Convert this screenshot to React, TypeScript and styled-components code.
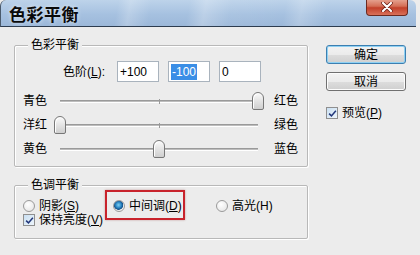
import { ReactNode } from "react";
import styled, { createGlobalStyle } from "styled-components";

const GlobalStyle = createGlobalStyle`
  html, body {
    margin: 0;
    padding: 0;
    background: #ececec;
  }
  body {
    font-family: "Liberation Sans", "Noto Sans CJK SC", sans-serif;
    font-size: 12px;
    color: #000;
  }
`;

type SliderRowData = { left: string; right: string; value: number };

const sliders: SliderRowData[] = [
  { left: "青色", right: "红色", value: 100 },
  { left: "洋红", right: "绿色", value: -100 },
  { left: "黄色", right: "蓝色", value: 0 },
];

const TRACK_WIDTH = 210;
const THUMB_WIDTH = 12;

const Mnemonic = ({ children }: { children: ReactNode }) => <U>{children}</U>;

const CheckIcon = () => (
  <svg viewBox="0 0 12 12" width="9" height="9">
    <path d="M1.5 6.2 L4.6 9.2 L10.5 2.2" fill="none" stroke="#21367a" strokeWidth="2" />
  </svg>
);

const Checkbox = ({ label }: { label: ReactNode }) => (
  <CheckRow>
    <CheckBox>
      <CheckIcon />
    </CheckBox>
    <span>{label}</span>
  </CheckRow>
);

const Radio = ({ label, checked = false, marked = false }: { label: ReactNode; checked?: boolean; marked?: boolean }) => (
  <RadioOption $marked={marked}>
    <RadioCircle $checked={checked} />
    <span>{label}</span>
  </RadioOption>
);

const Slider = ({ left, right, value }: SliderRowData) => {
  const offset = ((value + 100) / 200) * (TRACK_WIDTH - THUMB_WIDTH);
  return (
    <SliderRow>
      <SideLabel>{left}</SideLabel>
      <Track>
        <Groove />
        <Tick />
        <Thumb style={{ left: offset }} />
      </Track>
      <SideLabel>{right}</SideLabel>
    </SliderRow>
  );
};

export default function App() {
  return (
    <>
      <GlobalStyle />
      <Window>
        <TitleBar>
          <Title>色彩平衡</Title>
          <CloseButton>
            <svg viewBox="0 0 14 10" width="14" height="10">
              <path d="M3 1 L11 9 M11 1 L3 9" stroke="#6b1d12" strokeWidth="3.6" strokeLinecap="round" />
              <path d="M3 1 L11 9 M11 1 L3 9" stroke="#ffffff" strokeWidth="2.2" strokeLinecap="round" />
            </svg>
          </CloseButton>
        </TitleBar>
        <Body>
          <LeftColumn>
            <GroupBox $height={122} $padTop={15}>
              <Legend>色彩平衡</Legend>
              <LevelRow>
                <LevelLabel>
                  色阶(<Mnemonic>L</Mnemonic>):
                </LevelLabel>
                <LevelInput>+100</LevelInput>
                <LevelInput>
                  <Selected>-100</Selected>
                </LevelInput>
                <LevelInput>0</LevelInput>
              </LevelRow>
              {sliders.map((s) => (
                <Slider key={s.left} {...s} />
              ))}
            </GroupBox>
            <GroupBox $height={54} $padTop={14}>
              <Legend>色调平衡</Legend>
              <RadioRow>
                <Radio label={<>阴影(<Mnemonic>S</Mnemonic>)</>} />
                <Radio label={<>中间调(<Mnemonic>D</Mnemonic>)</>} checked marked />
                <Radio label="高光(H)" />
              </RadioRow>
              <Checkbox label={<>保持亮度(<Mnemonic>V</Mnemonic>)</>} />
            </GroupBox>
          </LeftColumn>
          <RightColumn>
            <Button $default>确定</Button>
            <Button>取消</Button>
            <PreviewWrap>
              <Checkbox label={<>预览(<Mnemonic>P</Mnemonic>)</>} />
            </PreviewWrap>
          </RightColumn>
        </Body>
      </Window>
    </>
  );
}

const Window = styled.div`
  width: 420px;
  height: 255px;
  overflow: hidden;
  background: #ececec;
`;

const TitleBar = styled.div`
  position: relative;
  display: flex;
  align-items: center;
  height: 26px;
  margin-right: 4px;
  padding-left: 8px;
  border-bottom: 1px solid #2d3c4f;
  border-left: 1px solid #4a5a6c;
  border-radius: 6px 6px 0 0;
  background:
    linear-gradient(100deg,
      rgba(255, 255, 255, 0) 0%,
      rgba(255, 255, 255, 0) 28%,
      rgba(255, 255, 255, 0.22) 31%,
      rgba(255, 255, 255, 0) 36%,
      rgba(255, 255, 255, 0) 45%,
      rgba(255, 255, 255, 0.25) 49%,
      rgba(255, 255, 255, 0.05) 55%,
      rgba(255, 255, 255, 0) 68%,
      rgba(255, 255, 255, 0.2) 72%,
      rgba(255, 255, 255, 0) 78%
    ),
    linear-gradient(180deg, #bdd3ea 0%, #a6c1e0 55%, #9cb8d9 100%);
`;

const Title = styled.span`
  font-family: "Noto Sans CJK SC", sans-serif;
  font-size: 17px;
  font-weight: 700;
  letter-spacing: 0.5px;
  color: #0a0a0a;
  text-shadow: 0 0 4px rgba(255, 255, 255, 0.7);
`;

const CloseButton = styled.div`
  position: absolute;
  top: -1px;
  right: 8px;
  width: 42px;
  height: 17px;
  display: flex;
  align-items: center;
  justify-content: center;
  border: 1px solid #6c2a20;
  border-top: none;
  border-radius: 0 0 4px 4px;
  background: linear-gradient(180deg, #e7a896 0%, #d46e56 45%, #c2402a 55%, #d9715a 100%);
  box-sizing: border-box;
`;

const Body = styled.div`
  display: flex;
  padding: 18px 0 0 14px;
`;

const LeftColumn = styled.div`
  display: flex;
  flex-direction: column;
  gap: 18px;
  width: 294px;
`;

const RightColumn = styled.div`
  display: flex;
  flex-direction: column;
  gap: 8px;
  width: 80px;
  margin-left: 18px;
`;

const GroupBox = styled.div<{ $height: number; $padTop: number }>`
  position: relative;
  box-sizing: border-box;
  height: ${({ $height }) => $height}px;
  border: 1px solid #b8b8b8;
  border-radius: 2px;
  box-shadow: inset 1px 1px 0 #ffffff, 1px 1px 0 #ffffff;
  padding-top: ${({ $padTop }) => $padTop}px;
`;

const Legend = styled.span`
  position: absolute;
  top: -9px;
  left: 13px;
  padding: 0 3px;
  background: #ececec;
  line-height: 16px;
`;

const LevelRow = styled.div`
  display: flex;
  align-items: center;
  gap: 9px;
  height: 21px;
  padding-left: 48px;
  margin-bottom: 7px;
`;

const LevelLabel = styled.span`
  width: 45px;
  line-height: 16px;
`;

const LevelInput = styled.div`
  box-sizing: border-box;
  width: 42px;
  height: 21px;
  display: flex;
  align-items: center;
  padding-left: 2px;
  background: #ffffff;
  border: 1px solid #a9b3bd;
  font-size: 12px;
`;

const Selected = styled.span`
  background: #3a8ee6;
  color: #ffffff;
  padding: 1px 1px;
`;

const SliderRow = styled.div`
  display: flex;
  align-items: center;
  height: 24px;
  padding-left: 8px;
`;

const SideLabel = styled.span`
  width: 31px;
  line-height: 16px;
  &:last-child {
    margin-left: 10px;
  }
`;

const Track = styled.div`
  position: relative;
  width: ${TRACK_WIDTH}px;
  height: 18px;
`;

const Groove = styled.div`
  position: absolute;
  left: 6px;
  right: 6px;
  top: 8px;
  height: 1px;
  background: #bdbdbd;
  border-top: 1px solid #9a9a9a;
  border-bottom: 1px solid #ffffff;
`;

const Tick = styled.div`
  position: absolute;
  left: 105px;
  top: 7px;
  width: 1px;
  height: 5px;
  background: #9a9a9a;
`;

const Thumb = styled.div`
  position: absolute;
  top: 0;
  box-sizing: border-box;
  width: ${THUMB_WIDTH}px;
  height: 18px;
  border: 1px solid #777777;
  border-radius: 6px 6px 2px 2px;
  background: linear-gradient(180deg, #fbfbfb 0%, #e4e4e4 50%, #cfcfcf 100%);
  box-shadow: inset 1px 1px 0 #ffffff;
`;

const RadioRow = styled.div`
  display: grid;
  grid-template-columns: 90px 103px auto;
  align-items: center;
  height: 12px;
  margin-bottom: 2px;
  padding-left: 8px;
`;

const RadioOption = styled.label<{ $marked?: boolean }>`
  position: relative;
  display: flex;
  align-items: center;
  gap: 4px;
  height: 12px;
  line-height: 12px;
  ${({ $marked }) =>
    $marked &&
    `
    &::after {
      content: "";
      position: absolute;
      left: -8px;
      top: -10px;
      width: 76px;
      height: 26px;
      border: 2px solid #c8232c;
      box-shadow: 0 0 2px rgba(120, 0, 0, 0.35);
    }
  `}
`;

const RadioCircle = styled.span<{ $checked?: boolean }>`
  box-sizing: border-box;
  width: 12px;
  height: 12px;
  border-radius: 50%;
  border: 1px solid #9a9a9a;
  background: ${({ $checked }) =>
    $checked
      ? "radial-gradient(circle at 45% 40%, #7fd0f2 0%, #2a86c4 35%, #144f86 55%, #f0f0f0 62%, #e6e6e6 100%)"
      : "radial-gradient(circle at 40% 35%, #ffffff 0%, #e2e2e2 100%)"};
`;

const CheckRow = styled.label`
  display: flex;
  align-items: center;
  gap: 4px;
  height: 12px;
  padding-left: 8px;
  line-height: 12px;
`;

const CheckBox = styled.span`
  box-sizing: border-box;
  width: 12px;
  height: 12px;
  display: flex;
  align-items: center;
  justify-content: center;
  border: 1px solid #8f8f8f;
  background: linear-gradient(135deg, #c9dff2 0%, #eef5fb 100%);
`;

const Button = styled.div<{ $default?: boolean }>`
  box-sizing: border-box;
  height: 19px;
  display: flex;
  align-items: center;
  justify-content: center;
  border: 1px solid ${({ $default }) => ($default ? "#3c7fb1" : "#707070")};
  border-radius: 3px;
  background: linear-gradient(180deg, #f3f3f3 0%, #ebebeb 50%, #dddddd 51%, #cfcfcf 100%);
  box-shadow: ${({ $default }) => ($default ? "inset 0 0 0 1px #8fd1f3" : "inset 0 0 0 1px #fcfcfc")};
  line-height: 14px;
`;

const PreviewWrap = styled.div`
  margin-top: 8px;
  margin-left: -8px;
`;

const U = styled.span`
  text-decoration: underline;
`;
